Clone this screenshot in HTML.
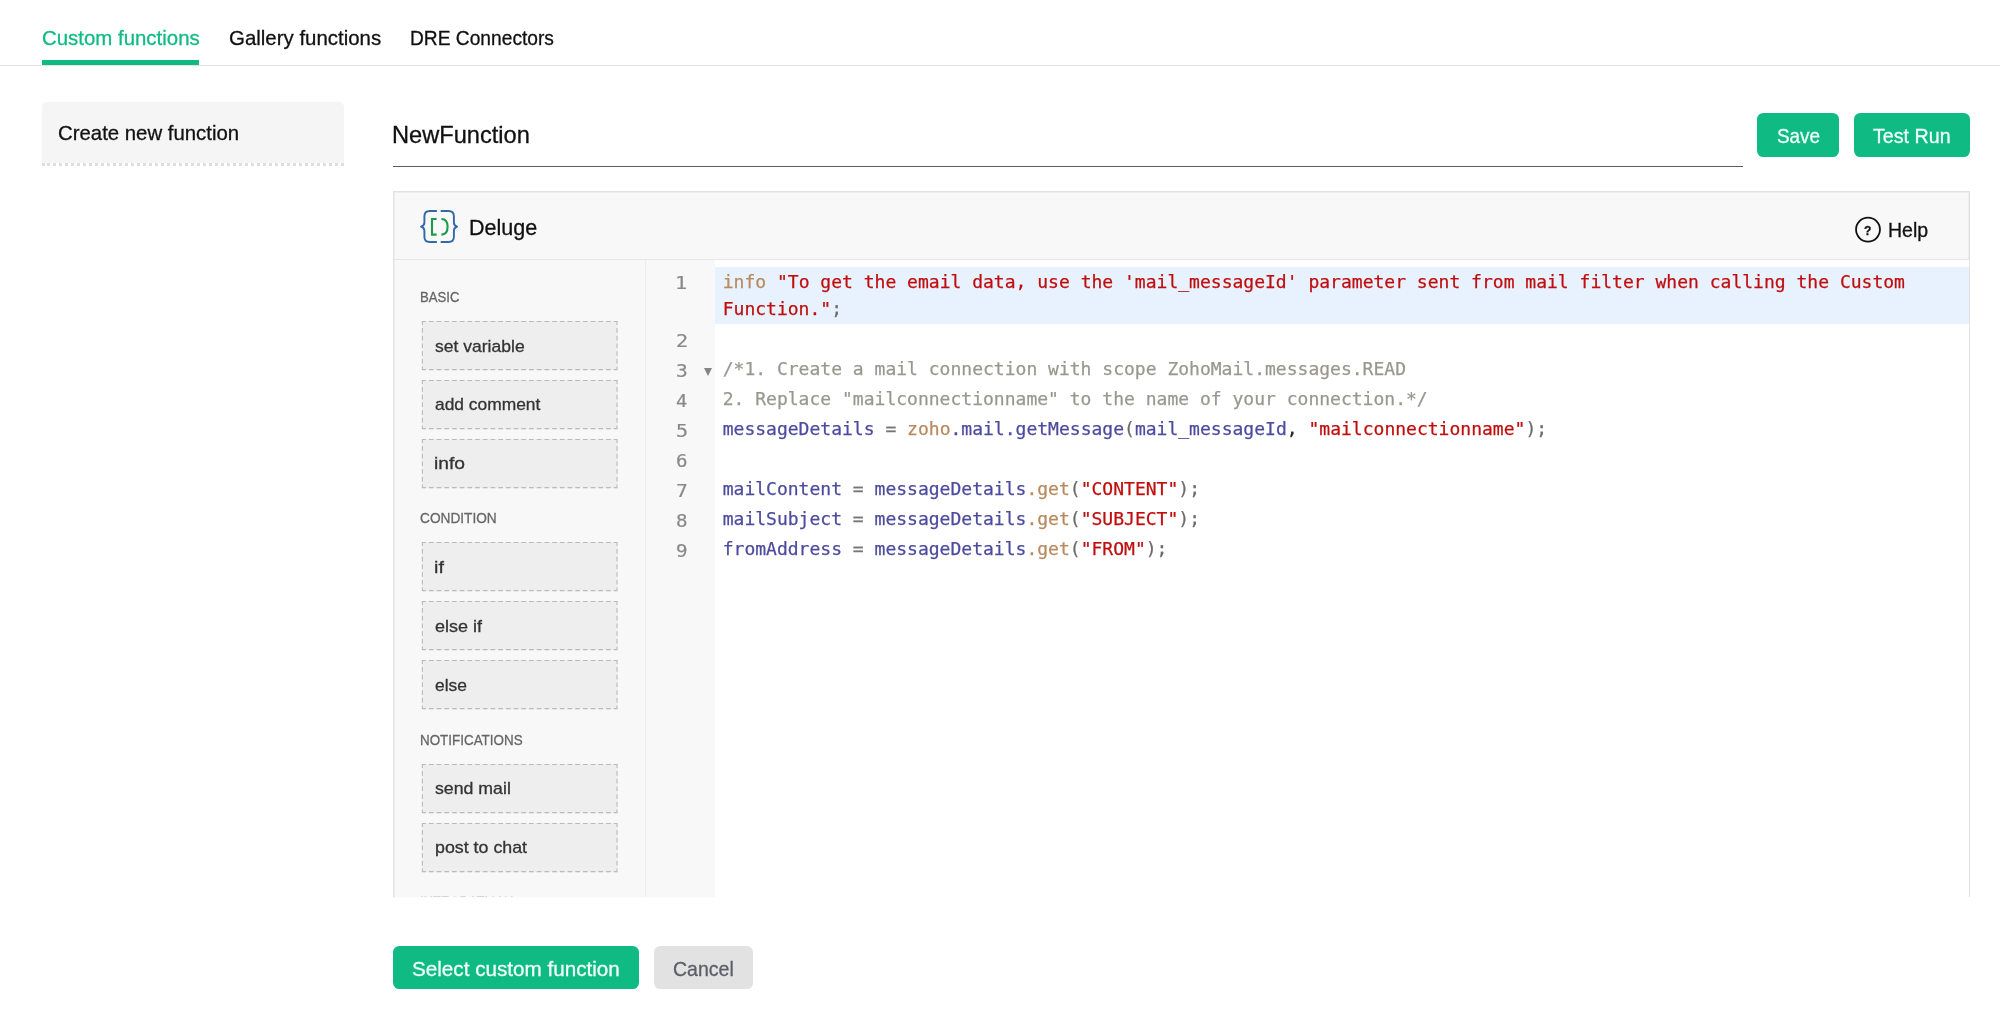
<!DOCTYPE html>
<html lang="en"><head><meta charset="utf-8"><title>Custom functions</title>
<style>
*{box-sizing:border-box;margin:0;padding:0}
html,body{width:2000px;height:1012px;overflow:hidden;background:#fff}
body{position:relative;will-change:transform;font-family:"Liberation Sans",sans-serif;color:#111}
.t{position:absolute;white-space:nowrap;line-height:1;transform-origin:0 0;display:block;-webkit-text-stroke:0.3px}
.m{font-family:"DejaVu Sans Mono","Liberation Mono",monospace;-webkit-text-stroke:0}
.m.n{-webkit-text-stroke:0.2px}
.abs{position:absolute}
.btn{position:absolute;border-radius:6.3px}
.code{position:absolute;left:715px;top:260.5px;width:1253.5px;-webkit-text-stroke:0.25px;font-family:"DejaVu Sans Mono","Liberation Mono",monospace;font-size:18.02px;color:#777}
.ln{padding:1.5px 0 1.5px 7.7px;line-height:27px;white-space:pre;height:30px}
.ln.w{height:57px;background:#e8f2fe}
.k{color:#b88a5e}.s{color:#c00d0d}.v{color:#4c4b9e}.c{color:#98988f}.p{color:#6b6b6b}.b{color:#222}
</style></head><body>

<span class="t " style="left:41.53px;top:27.22px;font-size:21px;color:#10bb83;transform:scaleX(0.9720)">Custom functions</span>
<span class="t " style="left:228.63px;top:27.22px;font-size:21px;color:#111;transform:scaleX(0.9729)">Gallery functions</span>
<span class="t " style="left:410.05px;top:27.22px;font-size:21px;color:#111;transform:scaleX(0.9137)">DRE Connectors</span>
<div class="abs" style="left:0;top:65px;width:2000px;height:1px;background:#e3e3e3"></div>
<div class="abs" style="left:42px;top:60px;width:157px;height:4.5px;background:#10bb83"></div>
<div class="abs" style="left:42px;top:102px;width:301.5px;height:60.5px;background:#f5f5f5;border-radius:5px 5px 0 0"></div>
<div class="abs" style="left:42px;top:162.5px;width:301.5px;height:0;border-top:3px dotted #dedede"></div>
<span class="t " style="left:58.43px;top:122.12px;font-size:21px;color:#111;transform:scaleX(0.9696)">Create new function</span>
<span class="t " style="left:392.13px;top:122.58px;font-size:24px;color:#111;transform:scaleX(0.9839)">NewFunction</span>
<div class="abs" style="left:393px;top:165.6px;width:1349.5px;height:1.3px;background:#5a5d66"></div>
<div class="btn" style="left:1757.3px;top:112.7px;width:81.6px;height:43.9px;background:#10bb83"></div>
<span class="t " style="left:1776.69px;top:124.82px;font-size:21px;color:#f0fff8;transform:scaleX(0.9002)">Save</span>
<div class="btn" style="left:1853.8px;top:112.7px;width:116.1px;height:43.9px;background:#10bb83"></div>
<span class="t " style="left:1873.33px;top:124.82px;font-size:21px;color:#f0fff8;transform:scaleX(0.9360)">Test Run</span>
<div class="abs" style="left:393px;top:191px;width:1577px;height:706.3px;overflow:hidden">
<div class="abs" style="left:0;top:0;width:1577px;height:760px;border:1px solid #e2e2e2;box-shadow:inset 0 0 0 1px #eeeeee;background:#f8f8f8"></div>
</div>
<div class="abs" style="left:394.5px;top:259px;width:1574px;height:1.3px;background:#e6e6e6"></div>
<div class="abs" style="left:715px;top:260.4px;width:1253.5px;height:636.9px;background:#fff"></div>
<div class="abs" style="left:644.6px;top:260.4px;width:1.2px;height:636.9px;background:#ededed"></div>
<svg class="abs" style="left:418px;top:207px" width="42" height="40" viewBox="0 0 42 40">
<g fill="none" stroke="#2f6aa6" stroke-width="1.9" stroke-linecap="round" stroke-linejoin="round">
<path d="M18.2 4 H11.7 Q6.4 4 6.4 9.3 V15.5 Q6.4 18.6 3.1 19.6 Q6.4 20.6 6.4 23.7 V29.7 Q6.4 35 11.7 35 H18.2"/>
<path d="M23.4 4 H30.5 Q35.9 4 35.9 9.3 V15.5 Q35.9 18.6 39.1 19.6 Q35.9 20.6 35.9 23.7 V29.7 Q35.9 35 30.5 35 H23.4"/>
</g>
<g fill="none" stroke="#1e9a4c" stroke-width="2.1" stroke-linecap="butt" stroke-linejoin="miter">
<path d="M18.6 12 H14 V27.6 H18.6"/>
<path d="M23.4 12 Q29.6 12 29.6 19.8 Q29.6 27.6 23.4 27.6"/>
</g></svg>
<span class="t " style="left:468.80px;top:217.80px;font-size:21.5px;color:#111;transform:scaleX(1.0015)">Deluge</span>
<svg class="abs" style="left:1852px;top:214px" width="32" height="32" viewBox="0 0 32 32"><circle cx="16" cy="15.6" r="11.95" fill="none" stroke="#111" stroke-width="1.8"/></svg>
<span class="t " style="left:1864.16px;top:223.57px;font-size:13.5px;color:#111;transform:scaleX(0.8986);font-weight:bold">?</span>
<span class="t " style="left:1887.74px;top:220.37px;font-size:20px;color:#111;transform:scaleX(0.9767)">Help</span>
<span class="t " style="left:419.58px;top:289.08px;font-size:15.5px;color:#666;transform:scaleX(0.8479)">BASIC</span>
<svg class="abs" style="left:421px;top:320.1px" width="198" height="52" viewBox="0 0 198 52"><rect x="0.8" y="0.9" width="195.8" height="49.3" fill="#eeeeee"/><path d="M0.8 1.5H196.6M0.8 49.6H196.6M1.4 0.9V50.2M196 0.9V50.2" fill="none" stroke="#bababa" stroke-width="1.1" stroke-dasharray="4.6 3.1" stroke-dashoffset="0.5"/></svg>
<span class="t " style="left:435.29px;top:337.61px;font-size:17px;color:#333;transform:scaleX(1.0315)">set variable</span>
<svg class="abs" style="left:421px;top:378.9px" width="198" height="52" viewBox="0 0 198 52"><rect x="0.8" y="0.9" width="195.8" height="49.3" fill="#eeeeee"/><path d="M0.8 1.5H196.6M0.8 49.6H196.6M1.4 0.9V50.2M196 0.9V50.2" fill="none" stroke="#bababa" stroke-width="1.1" stroke-dasharray="4.6 3.1" stroke-dashoffset="0.5"/></svg>
<span class="t " style="left:434.98px;top:396.41px;font-size:17px;color:#333;transform:scaleX(1.0225)">add comment</span>
<svg class="abs" style="left:421px;top:437.7px" width="198" height="52" viewBox="0 0 198 52"><rect x="0.8" y="0.9" width="195.8" height="49.3" fill="#eeeeee"/><path d="M0.8 1.5H196.6M0.8 49.6H196.6M1.4 0.9V50.2M196 0.9V50.2" fill="none" stroke="#bababa" stroke-width="1.1" stroke-dasharray="4.6 3.1" stroke-dashoffset="0.5"/></svg>
<span class="t " style="left:434.45px;top:455.21px;font-size:17px;color:#333;transform:scaleX(1.1323)">info</span>
<span class="t " style="left:419.98px;top:510.48px;font-size:15.5px;color:#666;transform:scaleX(0.8825)">CONDITION</span>
<svg class="abs" style="left:421px;top:541.4px" width="198" height="52" viewBox="0 0 198 52"><rect x="0.8" y="0.9" width="195.8" height="49.3" fill="#eeeeee"/><path d="M0.8 1.5H196.6M0.8 49.6H196.6M1.4 0.9V50.2M196 0.9V50.2" fill="none" stroke="#bababa" stroke-width="1.1" stroke-dasharray="4.6 3.1" stroke-dashoffset="0.5"/></svg>
<span class="t " style="left:434.42px;top:558.91px;font-size:17px;color:#333;transform:scaleX(1.1600)">if</span>
<svg class="abs" style="left:421px;top:600.2px" width="198" height="52" viewBox="0 0 198 52"><rect x="0.8" y="0.9" width="195.8" height="49.3" fill="#eeeeee"/><path d="M0.8 1.5H196.6M0.8 49.6H196.6M1.4 0.9V50.2M196 0.9V50.2" fill="none" stroke="#bababa" stroke-width="1.1" stroke-dasharray="4.6 3.1" stroke-dashoffset="0.5"/></svg>
<span class="t " style="left:434.96px;top:617.71px;font-size:17px;color:#333;transform:scaleX(1.0571)">else if</span>
<svg class="abs" style="left:421px;top:659.0px" width="198" height="52" viewBox="0 0 198 52"><rect x="0.8" y="0.9" width="195.8" height="49.3" fill="#eeeeee"/><path d="M0.8 1.5H196.6M0.8 49.6H196.6M1.4 0.9V50.2M196 0.9V50.2" fill="none" stroke="#bababa" stroke-width="1.1" stroke-dasharray="4.6 3.1" stroke-dashoffset="0.5"/></svg>
<span class="t " style="left:434.98px;top:676.51px;font-size:17px;color:#333;transform:scaleX(1.0236)">else</span>
<span class="t " style="left:419.56px;top:731.98px;font-size:15.5px;color:#666;transform:scaleX(0.8655)">NOTIFICATIONS</span>
<svg class="abs" style="left:421px;top:762.7px" width="198" height="52" viewBox="0 0 198 52"><rect x="0.8" y="0.9" width="195.8" height="49.3" fill="#eeeeee"/><path d="M0.8 1.5H196.6M0.8 49.6H196.6M1.4 0.9V50.2M196 0.9V50.2" fill="none" stroke="#bababa" stroke-width="1.1" stroke-dasharray="4.6 3.1" stroke-dashoffset="0.5"/></svg>
<span class="t " style="left:435.28px;top:780.21px;font-size:17px;color:#333;transform:scaleX(1.0421)">send mail</span>
<svg class="abs" style="left:421px;top:821.5px" width="198" height="52" viewBox="0 0 198 52"><rect x="0.8" y="0.9" width="195.8" height="49.3" fill="#eeeeee"/><path d="M0.8 1.5H196.6M0.8 49.6H196.6M1.4 0.9V50.2M196 0.9V50.2" fill="none" stroke="#bababa" stroke-width="1.1" stroke-dasharray="4.6 3.1" stroke-dashoffset="0.5"/></svg>
<span class="t " style="left:434.65px;top:839.01px;font-size:17px;color:#333;transform:scaleX(1.0472)">post to chat</span>
<div class="abs" style="left:420px;top:890px;width:200px;height:7.3px;overflow:hidden">
<span class="t " style="left:0.45px;top:6.43px;font-size:15.8px;color:#777;transform:scaleX(0.8187)">INTEGRATIONS</span>
</div>
<span class="t n m" style="left:675.28px;top:275.28px;font-size:17.4px;color:#898989;transform:scaleX(1.1600)">1</span>
<span class="t n m" style="left:676.11px;top:332.68px;font-size:17.4px;color:#898989;transform:scaleX(1.1600)">2</span>
<span class="t n m" style="left:676.26px;top:362.68px;font-size:17.4px;color:#898989;transform:scaleX(1.1235)">3</span>
<span class="t n m" style="left:676.14px;top:392.68px;font-size:17.4px;color:#898989;transform:scaleX(1.0787)">4</span>
<span class="t n m" style="left:676.12px;top:422.68px;font-size:17.4px;color:#898989;transform:scaleX(1.1519)">5</span>
<span class="t n m" style="left:676.29px;top:452.68px;font-size:17.4px;color:#898989;transform:scaleX(1.0964)">6</span>
<span class="t n m" style="left:676.26px;top:482.68px;font-size:17.4px;color:#898989;transform:scaleX(1.1235)">7</span>
<span class="t n m" style="left:676.29px;top:512.68px;font-size:17.4px;color:#898989;transform:scaleX(1.0964)">8</span>
<span class="t n m" style="left:676.40px;top:542.68px;font-size:17.4px;color:#898989;transform:scaleX(1.0964)">9</span>
<div class="abs" style="left:704.2px;top:368px;width:0;height:0;border-left:4.3px solid transparent;border-right:4.3px solid transparent;border-top:8px solid #858585"></div>
<div class="code"><div style="height:6px"></div>
<div class="ln w"><span class="k">info</span> <span class="s">"To get the email data, use the 'mail_messageId' parameter sent from mail filter when calling the Custom
Function."</span><span class="p">;</span></div>
<div class="ln"> </div>
<div class="ln"><span class="c">/*1. Create a mail connection with scope ZohoMail.messages.READ</span></div>
<div class="ln"><span class="c">2. Replace "mailconnectionname" to the name of your connection.*/</span></div>
<div class="ln"><span class="v">messageDetails</span> = <span class="k">zoho</span><span class="v">.mail.getMessage</span><span class="p">(</span><span class="v">mail_messageId</span><span class="b">,</span> <span class="s">"mailconnectionname"</span><span class="p">);</span></div>
<div class="ln"> </div>
<div class="ln"><span class="v">mailContent</span> = <span class="v">messageDetails</span><span class="k">.get</span><span class="p">(</span><span class="s">"CONTENT"</span><span class="p">);</span></div>
<div class="ln"><span class="v">mailSubject</span> = <span class="v">messageDetails</span><span class="k">.get</span><span class="p">(</span><span class="s">"SUBJECT"</span><span class="p">);</span></div>
<div class="ln"><span class="v">fromAddress</span> = <span class="v">messageDetails</span><span class="k">.get</span><span class="p">(</span><span class="s">"FROM"</span><span class="p">);</span></div>
</div>
<div class="abs" style="left:393px;top:897px;width:322px;height:1px;background:#f8f8f8;border-left:1px solid #e2e2e2;opacity:.35"></div>
<div class="btn" style="left:393px;top:945.6px;width:245.6px;height:43.8px;background:#10bb83"></div>
<span class="t " style="left:412.12px;top:958.22px;font-size:21px;color:#f0fff8;transform:scaleX(0.9833)">Select custom function</span>
<div class="btn" style="left:653.6px;top:945.6px;width:99.4px;height:43.8px;background:#e2e2e2"></div>
<span class="t " style="left:673.07px;top:958.22px;font-size:21px;color:#5b5e66;transform:scaleX(0.9302)">Cancel</span>
</body></html>
